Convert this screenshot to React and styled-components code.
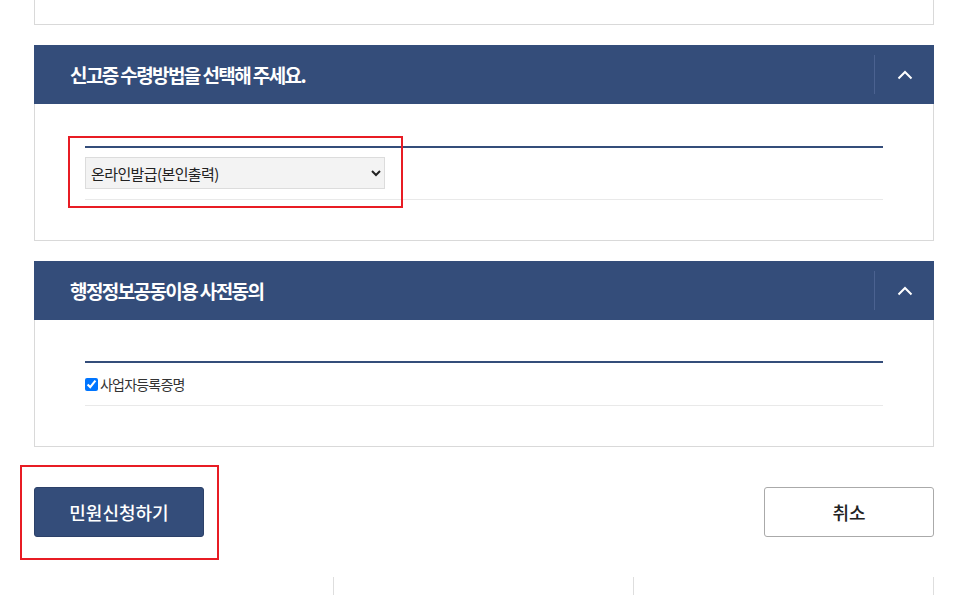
import React from "react";
import styled, { createGlobalStyle } from "styled-components";

const NAVY = "#344d7a";
const LINE = "#d9d9d9";
const MARK = "#e81c24";

const GlobalStyle = createGlobalStyle`
  html, body {
    margin: 0;
    padding: 0;
    background: #fff;
    font-family: "Noto Sans CJK KR", "Noto Sans", sans-serif;
    color: #222;
  }
`;

const Page = styled.div`
  width: 900px;
  padding-left: 34px;
  display: flex;
  flex-direction: column;
`;

const PrevCard = styled.div`
  height: 24px;
  border: 1px solid ${LINE};
  border-top: none;
`;

const Section = styled.section`
  margin-top: 20px;
  display: flex;
  flex-direction: column;
`;

const SectionHeader = styled.div`
  height: 59px;
  background: ${NAVY};
  display: flex;
  align-items: center;
`;

const SectionTitle = styled.h3`
  flex: 1;
  margin: 0;
  padding-left: 36px;
  font-size: 19px;
  font-weight: 700;
  letter-spacing: -1.6px;
  color: #fff;
`;

const ToggleButton = styled.button`
  width: 60px;
  height: 39px;
  border: none;
  border-left: 1px solid #4b6290;
  background: transparent;
  display: flex;
  align-items: center;
  justify-content: center;
  padding: 0;
  cursor: pointer;
`;

const SectionBody = styled.div`
  border: 1px solid ${LINE};
  border-top: none;
  padding: ${({ $top }) => $top}px 50px 40px;
`;

const FormTable = styled.div`
  border-top: 2px solid ${NAVY};
`;

const FormRow = styled.div`
  display: flex;
  align-items: center;
  padding: ${({ $pad }) => $pad};
  border-bottom: 1px solid #e9e9e9;
`;

const Marked = styled.div`
  position: relative;
  display: inline-flex;
`;

const Highlight = styled.div`
  position: absolute;
  left: ${({ $l }) => $l}px;
  top: ${({ $t }) => $t}px;
  width: ${({ $w }) => $w}px;
  height: ${({ $h }) => $h}px;
  border: 2px solid ${MARK};
  box-sizing: border-box;
  pointer-events: none;
`;

const Select = styled.select`
  width: 300px;
  height: 32px;
  padding: 0 1px;
  background: #f3f3f3;
  border: 1px solid #dcdcdc;
  border-radius: 0;
  font-family: "Noto Sans CJK KR", sans-serif;
  font-size: 15px;
  letter-spacing: -0.6px;
  color: #222;
`;

const CheckLabel = styled.label`
  display: flex;
  align-items: center;
  gap: 2px;
  font-size: 14px;
  line-height: 20px;
  letter-spacing: -0.8px;
  color: #333;
`;

const Check = styled.input`
  width: 13px;
  height: 13px;
  margin: 0;
`;

const Actions = styled.div`
  margin-top: 40px;
  display: flex;
  justify-content: space-between;
`;

const Button = styled.button`
  width: 170px;
  height: 50px;
  border-radius: 3px;
  font-family: "Noto Sans CJK KR", sans-serif;
  font-size: 18px;
  font-weight: 500;
  letter-spacing: 0;
  cursor: pointer;
  background: ${({ $primary }) => ($primary ? NAVY : "#fff")};
  color: ${({ $primary }) => ($primary ? "#fff" : "#222")};
  border: 1px solid ${({ $primary }) => ($primary ? "#2c4169" : "#aaa")};
`;

const Footer = styled.div`
  margin-top: 40px;
  display: grid;
  grid-template-columns: repeat(3, 300px);
  height: 30px;
`;

const FooterCell = styled.div`
  border-right: 1px solid #dedede;
`;

const ChevronUp = () => (
  <svg width="16" height="10" viewBox="0 0 16 10">
    <path d="M1.5 8.5 L8 2 L14.5 8.5" fill="none" stroke="#fff" strokeWidth="2" />
  </svg>
);

const Panel = ({ title, top, children }) => (
  <Section>
    <SectionHeader>
      <SectionTitle>{title}</SectionTitle>
      <ToggleButton aria-label="접기">
        <ChevronUp />
      </ToggleButton>
    </SectionHeader>
    <SectionBody $top={top}>
      <FormTable>{children}</FormTable>
    </SectionBody>
  </Section>
);

export default function App() {
  return (
    <>
      <GlobalStyle />
      <Page>
        <PrevCard />
        <Panel title="신고증 수령방법을 선택해 주세요." top={42}>
          <FormRow $pad="9px 0 10px">
            <Marked>
              <Select defaultValue="online">
                <option value="online">온라인발급(본인출력)</option>
                <option value="visit">방문수령</option>
                <option value="mail">우편수령</option>
              </Select>
              <Highlight $l={-17} $t={-21} $w={335} $h={72} />
            </Marked>
          </FormRow>
        </Panel>
        <Panel title="행정정보공동이용 사전동의" top={41}>
          <FormRow $pad="11px 0">
            <CheckLabel>
              <Check type="checkbox" defaultChecked />
              사업자등록증명
            </CheckLabel>
          </FormRow>
        </Panel>
        <Actions>
          <Marked>
            <Button $primary>민원신청하기</Button>
            <Highlight $l={-14} $t={-22} $w={199} $h={95} />
          </Marked>
          <Button>취소</Button>
        </Actions>
        <Footer>
          <FooterCell />
          <FooterCell />
          <FooterCell />
        </Footer>
      </Page>
    </>
  );
}
